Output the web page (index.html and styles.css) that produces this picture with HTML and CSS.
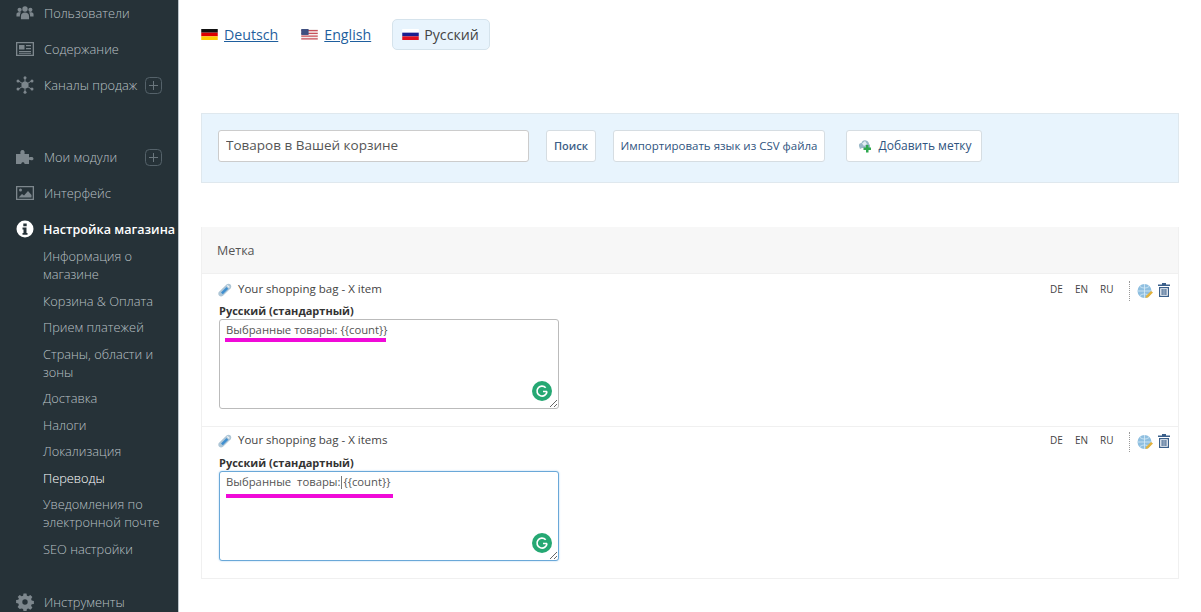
FILE: index.html
```html
<!DOCTYPE html>
<html lang="ru">
<head>
<meta charset="utf-8">
<title>Переводы</title>
<link rel="stylesheet" href="styles.css">
</head>
<body>
<div class="app">
  <nav class="sidebar">
    <a class="nav-item"><svg class="nav-icon" viewBox="0 0 20 16"><circle cx="10" cy="3.6" r="3"/><circle cx="4" cy="4.5" r="2.3"/><circle cx="16" cy="4.5" r="2.3"/><path d="M5.5 15v-3.5C5.500 9 7.500 7.500 10 7.500s4.500 1.500 4.500 4V15zM0.500 12V9.500C0.500 8 2 7.300 4 7.300c.6 0 1.100.1 1.500.3C4.700 8.400 4.300 9.500 4.300 12zM19.500 12V9.500C19.500 8 18 7.300 16 7.300c-.6 0-1.100.1-1.500.3.800.8 1.200 1.900 1.200 4.400z"/></svg><span>Пользователи</span></a>
    <a class="nav-item"><svg class="nav-icon" viewBox="0 0 18 16"><path fill-rule="evenodd" d="M0 1h18v14H0zM1.300 2.300v11.400h15.400V2.300zM3 4h5.500v4.500H3zM10 4h5v1.300h-5zM10 7h5v1.300h-5zM3 10h12v1.200H3zM3 12.200h12v.8H3z"/></svg><span>Содержание</span></a>
    <a class="nav-item"><svg class="nav-icon" viewBox="0 0 18 18"><circle cx="9" cy="9" r="3.600"/><g class="net"><path d="M9 9V2M9 9v7M9 9 2.500 5M9 9l6.500-4M9 9l-6.500 4M9 9l6.500 4"/></g><circle cx="9" cy="1.800" r="1.500"/><circle cx="9" cy="16.200" r="1.500"/><circle cx="2" cy="5" r="1.500"/><circle cx="16" cy="5" r="1.500"/><circle cx="2" cy="13" r="1.500"/><circle cx="16" cy="13" r="1.500"/></svg><span>Каналы продаж</span><svg class="plus" viewBox="0 0 17 17"><rect x=".5" y=".5" width="16" height="16" rx="4" fill="none" stroke="#55626a"/><path d="M8.500 4v9M4 8.500h9" stroke="#6a767d" fill="none"/></svg></a>
    <div class="nav-gap"></div>
    <a class="nav-item"><svg class="nav-icon" viewBox="0 0 18 16"><path d="M0 5h4.500C4 3 4.500 1 6.500 1S9 3 8.500 5H13v3.500c1.500-.7 4.500-.7 4.500 1.200S14.500 11.500 13 10.800V15H8.500c.4-2.500-3.500-2.500-3.200 0H0z"/></svg><span>Мои модули</span><svg class="plus plus-mod" viewBox="0 0 17 17"><rect x=".5" y=".5" width="16" height="16" rx="4" fill="none" stroke="#55626a"/><path d="M8.500 4v9M4 8.500h9" stroke="#6a767d" fill="none"/></svg></a>
    <a class="nav-item"><svg class="nav-icon" viewBox="0 0 18 16"><path fill-rule="evenodd" d="M0 1h18v14H0zM1.300 2.300v11.400h15.400V2.300z"/><circle cx="4.500" cy="5" r="1.500"/><path d="M2.500 12.500 6 9l2 1.500L12 6l3.500 4v2.500z"/></svg><span>Интерфейс</span></a>
    <a class="nav-item active"><svg class="nav-icon" viewBox="0 0 18 18"><path fill-rule="evenodd" d="M9 .5a8.500 8.500 0 1 1 0 17 8.500 8.500 0 0 1 0-17zM7.300 3.500v2.700h3.400V3.500zM6.500 7.500v2h1v3.500h-1v1.800h5V13h-1V7.500z"/></svg><span>Настройка магазина</span></a>
    <div class="sub">
      <a class="sub-item">Информация о магазине</a>
      <a class="sub-item">Корзина &amp; Оплата</a>
      <a class="sub-item">Прием платежей</a>
      <a class="sub-item">Страны, области и зоны</a>
      <a class="sub-item">Доставка</a>
      <a class="sub-item">Налоги</a>
      <a class="sub-item">Локализация</a>
      <a class="sub-item current">Переводы</a>
      <a class="sub-item">Уведомления по электронной почте</a>
      <a class="sub-item">SEO настройки</a>
    </div>
    <a class="nav-item tools"><svg class="nav-icon" viewBox="0 0 18 18"><path fill-rule="evenodd" d="M7.500.500h3l.4 2.200 1.500.6L14.300 2l2.100 2.100-1.300 1.900.6 1.500 2.200.4v3l-2.200.4-.6 1.500 1.300 1.900-2.100 2.100-1.900-1.300-1.500.6-.4 2.200h-3l-.4-2.200-1.500-.6L3.700 16l-2.100-2.100 1.300-1.900-.6-1.500L.1 10.100v-3l2.200-.4.6-1.500L1.600 4.100 3.700 2l1.900 1.300 1.500-.6zM9 6.300a2.700 2.700 0 1 0 0 5.400 2.700 2.700 0 0 0 0-5.400z"/></svg><span>Инструменты</span></a>
  </nav>

  <main class="content">
    <div class="langs">
      <a class="lang"><svg class="flag" viewBox="0 0 18 12"><rect width="18" height="4" fill="#111"/><rect y="4" width="18" height="4" fill="#d00"/><rect y="8" width="18" height="4" fill="#fc0"/></svg><span class="lang-link">Deutsch</span></a>
      <a class="lang"><svg class="flag" viewBox="0 0 18 12"><rect width="18" height="12" fill="#f4eeee"/><path d="M0 1h18v1.400H0zM0 4h18v1.400H0zM0 7h18v1.400H0zM0 10h18v1.400H0z" fill="#c8505a"/><rect width="8" height="6.500" fill="#3f4f80"/></svg><span class="lang-link">English</span></a>
      <a class="lang selected"><svg class="flag" viewBox="0 0 18 12"><rect width="18" height="4" fill="#fff"/><rect y="4" width="18" height="4" fill="#1a1f90"/><rect y="8" width="18" height="4" fill="#e01020"/></svg><span>Русский</span></a>
    </div>

    <div class="toolbar">
      <input class="search" type="text" value="Товаров в Вашей корзине">
      <a class="btn btn-search">Поиск</a>
      <a class="btn btn-import">Импортировать язык из CSV файла</a>
      <a class="btn btn-add"><svg class="ic-add" viewBox="0 0 16 16"><path d="M3 11 2 8c-.5-2 1-3 2.500-3C5 3 7 1.500 9 2.500c2 .5 3 2 3 3.500l1 1v3H5z" fill="#9ab8c8"/><path d="M5 5.500 8 3l2 3-3 2z" fill="#e4eef4"/><path d="M9 7h2.500v2.500H14V12h-2.500v2.500H9V12H6.500V9.500H9z" fill="#2fa84f"/></svg>Добавить метку</a>
    </div>

    <div class="table">
      <div class="table-head">Метка</div>

      <section class="row">
        <div class="row-top">
          <svg class="ic-tag" viewBox="0 0 14 14"><path d="M.8 9 8.500 1.500c1.200-1.100 3-1 4 0s1 2.800 0 4L5 12.800c-1.200 1-2.800 1-3.800 0S0 10 .8 9z" fill="#aec6d6"/><path d="M3 9.500 8.500 4l1.800 1.800L4.800 11.300z" fill="#3f8fd0"/><path d="M8.700 2.700l1-.7 2 2-.7 1z" fill="#eef4f8"/></svg>
          <span class="row-key">Your shopping bag - X item</span>
          <div class="row-actions">
            <span class="code">DE</span><span class="code">EN</span><span class="code">RU</span>
            <span class="dots"></span>
            <svg class="ic-globe" viewBox="0 0 16 16"><circle cx="7.500" cy="8" r="7" fill="#8fbfe0"/><path d="M1 8h13M7.500 1v14M3 3.500c3 2 6 2 9 0M3 12.500c3-2 6-2 9 0" stroke="#d8ecf8" stroke-width=".8" fill="none"/><path d="M9 13l5-5 2 1.500-5 5-2.500.5z" fill="#e3b23c"/></svg>
            <svg class="ic-trash" viewBox="0 0 12 14"><path fill-rule="evenodd" d="M4 0h4v1.500h4V3H0V1.500h4zM1 4h10v10H1zM2.200 5.200v7.600h7.600V5.200zM3.500 6h1.200v6H3.500zM5.400 6h1.200v6H5.400zM7.300 6h1.200v6H7.300z" fill="#3a5f8a"/></svg>
          </div>
        </div>
        <label class="field-label">Русский (стандартный)</label>
        <div class="editor">
          <textarea class="text" readonly>Выбранные товары: {{count}}</textarea>
          <span class="mark mark-one"></span>
          <svg class="grammarly" viewBox="0 0 20 20"><circle cx="10" cy="10" r="10" fill="#25a873"/><path d="M15 10.500h-4M15 10.500a5 5 0 1 1-1.300-3.800" stroke="#fff" stroke-width="1.700" fill="none"/></svg>
        </div>
      </section>

      <section class="row">
        <div class="row-top">
          <svg class="ic-tag" viewBox="0 0 14 14"><path d="M.8 9 8.500 1.500c1.200-1.100 3-1 4 0s1 2.800 0 4L5 12.800c-1.200 1-2.800 1-3.800 0S0 10 .8 9z" fill="#aec6d6"/><path d="M3 9.500 8.500 4l1.800 1.800L4.800 11.300z" fill="#3f8fd0"/><path d="M8.700 2.700l1-.7 2 2-.7 1z" fill="#eef4f8"/></svg>
          <span class="row-key">Your shopping bag - X items</span>
          <div class="row-actions">
            <span class="code">DE</span><span class="code">EN</span><span class="code">RU</span>
            <span class="dots"></span>
            <svg class="ic-globe" viewBox="0 0 16 16"><circle cx="7.500" cy="8" r="7" fill="#8fbfe0"/><path d="M1 8h13M7.500 1v14M3 3.500c3 2 6 2 9 0M3 12.500c3-2 6-2 9 0" stroke="#d8ecf8" stroke-width=".8" fill="none"/><path d="M9 13l5-5 2 1.500-5 5-2.500.5z" fill="#e3b23c"/></svg>
            <svg class="ic-trash" viewBox="0 0 12 14"><path fill-rule="evenodd" d="M4 0h4v1.500h4V3H0V1.500h4zM1 4h10v10H1zM2.200 5.200v7.600h7.600V5.200zM3.500 6h1.200v6H3.500zM5.400 6h1.200v6H5.400zM7.300 6h1.200v6H7.300z" fill="#3a5f8a"/></svg>
          </div>
        </div>
        <label class="field-label">Русский (стандартный)</label>
        <div class="editor">
          <textarea class="text focused" readonly>Выбранные  товары: {{count}}</textarea>
          <span class="mark mark-two"></span>
          <span class="caret"></span>
          <svg class="grammarly" viewBox="0 0 20 20"><circle cx="10" cy="10" r="10" fill="#25a873"/><path d="M15 10.500h-4M15 10.500a5 5 0 1 1-1.300-3.800" stroke="#fff" stroke-width="1.700" fill="none"/></svg>
        </div>
      </section>
    </div>
  </main>
</div>
</body>
</html>
```

FILE: styles.css
```css
* { box-sizing: border-box; }
html, body { margin: 0; height: 100%; overflow: hidden; background: #fff; }
body { font-family: "Open Sans", "Noto Sans", sans-serif; color: #444; }

.app { display: flex; height: 612px; overflow: hidden; }

.sidebar {
  width: 179px;
  flex: none;
  height: 612px;
  background: #263238;
  border-right: 1px solid #bcc5ca;
  display: flex;
  flex-direction: column;
  color: #b9c0c4;
  font-size: 12.800px;
  font-weight: 300;
  overflow: hidden;
}
.nav-item {
  display: flex;
  align-items: center;
  flex: none;
  height: 36px;
  padding-left: 16px;
  white-space: nowrap;
}
.nav-item:first-child { margin-top: -5px; }
.nav-icon { width: 18px; height: 18px; flex: none; margin-right: 10px; fill: #7d878d; }
.net path { stroke: #7d878d; stroke-width: 1; fill: none; }
.nav-item.active { color: #fff; font-weight: 600; font-size: 12.600px; }
.nav-item.active .nav-icon { fill: #fff; margin-right: 9px; }
.plus { width: 17px; height: 17px; flex: none; margin-left: 8px; }
.plus-mod { margin-left: 28px; }
.nav-gap { height: 36px; flex: none; }
.sub { display: flex; flex-direction: column; padding-left: 43px; padding-right: 14px; margin-top: -4px; }
.sub-item { line-height: 18px; padding: 4px 0 4.500px; }
.sub-item.current { color: #fff; }
.tools { margin-top: 22px; }

.content { flex: 1; min-width: 0; padding: 19px 22px 0 22px; }

.langs { display: flex; align-items: center; height: 31px; font-size: 14.200px; }
.lang { display: flex; align-items: center; margin-right: 22px; margin-top: -1px; }
.lang:first-child { margin-right: 23px; }
.flag { width: 17px; height: 11px; margin-right: 6px; flex: none; }
.lang-link { color: #1f5f9e; text-decoration: underline; }
.selected {
  height: 31px;
  margin-top: 0;
  margin-left: -1px;
  padding: 0 10px 0 9px;
  background: #e8f4fd;
  border: 1px solid #d5e3ec;
  border-radius: 5px;
  color: #444;
}
.selected .flag { margin-right: 5px; }

.toolbar {
  margin-top: 63px;
  height: 70px;
  padding: 0 16px;
  display: flex;
  align-items: center;
  background: #e8f4fd;
  border: 1px solid #dfe8ee;
  font-size: 11.500px;
}
.search {
  width: 311px; height: 32px;
  padding: 0 7px 2px;
  margin-top: -4px;
  border: 1px solid #ccc;
  border-radius: 3px;
  background: #fff;
  font: 400 13.500px "Open Sans", sans-serif;
  color: #555;
  outline: none;
}
.btn {
  display: flex; align-items: center; justify-content: center;
  height: 32px;
  margin-top: -4px;
  padding-bottom: 1px;
  background: #fff;
  border: 1px solid #d6dde2;
  border-radius: 3px;
  color: #2f5480;
  white-space: nowrap;
}
.btn-search { width: 50px; margin-left: 17px; font-weight: 600; font-size: 11px; color: #3d5f88; }
.btn-import { width: 212px; margin-left: 17px; }
.btn-add { width: 136px; margin-left: 21px; font-size: 12px; }
.ic-add { width: 16px; height: 16px; margin-right: 6px; }

.table { margin-top: 44px; border: 1px solid #f0f0f0; border-top: 0; }
.table-head {
  height: 46px;
  padding-left: 15px;
  display: flex;
  align-items: center;
  background: #f7f7f7;
  font-size: 12.500px;
  color: #555;
}
.row { height: 153px; padding: 6px 8px 0 16px; border-top: 1px solid #f0f0f0; }
.row + .row { height: 152px; padding-top: 4px; }
.row-top { display: flex; align-items: center; height: 17px; font-size: 11.500px; }
.ic-tag { width: 14px; height: 14px; margin-right: 6px; margin-top: 3px; flex: none; }
.row-key { color: #444; }
.row-actions { margin-left: auto; display: flex; align-items: center; font-size: 10px; color: #444; }
.code { margin-left: 12px; width: 13px; }
.dots { width: 0; height: 20px; margin-left: 16px; border-left: 1px dotted #999; margin-top: 4px; }
.ic-globe { width: 16px; height: 16px; margin-left: 7px; margin-top: 5px; }
.ic-trash { width: 12px; height: 14px; margin-left: 5px; margin-top: 3px; }

.field-label { display: block; margin: 7px 0 0 1px; font-size: 11px; line-height: 14px; font-weight: 700; color: #333; }
.row + .row .field-label { margin-top: 8px; }
.editor { position: relative; width: 340px; height: 90px; margin: 1px 0 0 1px; }
.text {
  display: block;
  width: 340px; height: 90px;
  padding: 2px 6px;
  border: 1px solid #bbb;
  border-radius: 3px;
  font: 400 11.300px/15px "Open Sans", sans-serif;
  color: #555;
  background: #fff;
  outline: none;
}
.text.focused { border-color: #6aa8d8; box-shadow: 0 0 2px #a6cfee; }
.mark { position: absolute; height: 3.500px; background: #f00ad8; }
.mark-one { left: 6px; top: 19px; width: 161px; }
.mark-two { left: 7px; top: 23px; width: 167px; }
.caret { position: absolute; left: 122px; top: 5px; width: 1px; height: 13px; background: #777; }
.grammarly { position: absolute; right: 7px; bottom: 8px; width: 20px; height: 20px; }
```
